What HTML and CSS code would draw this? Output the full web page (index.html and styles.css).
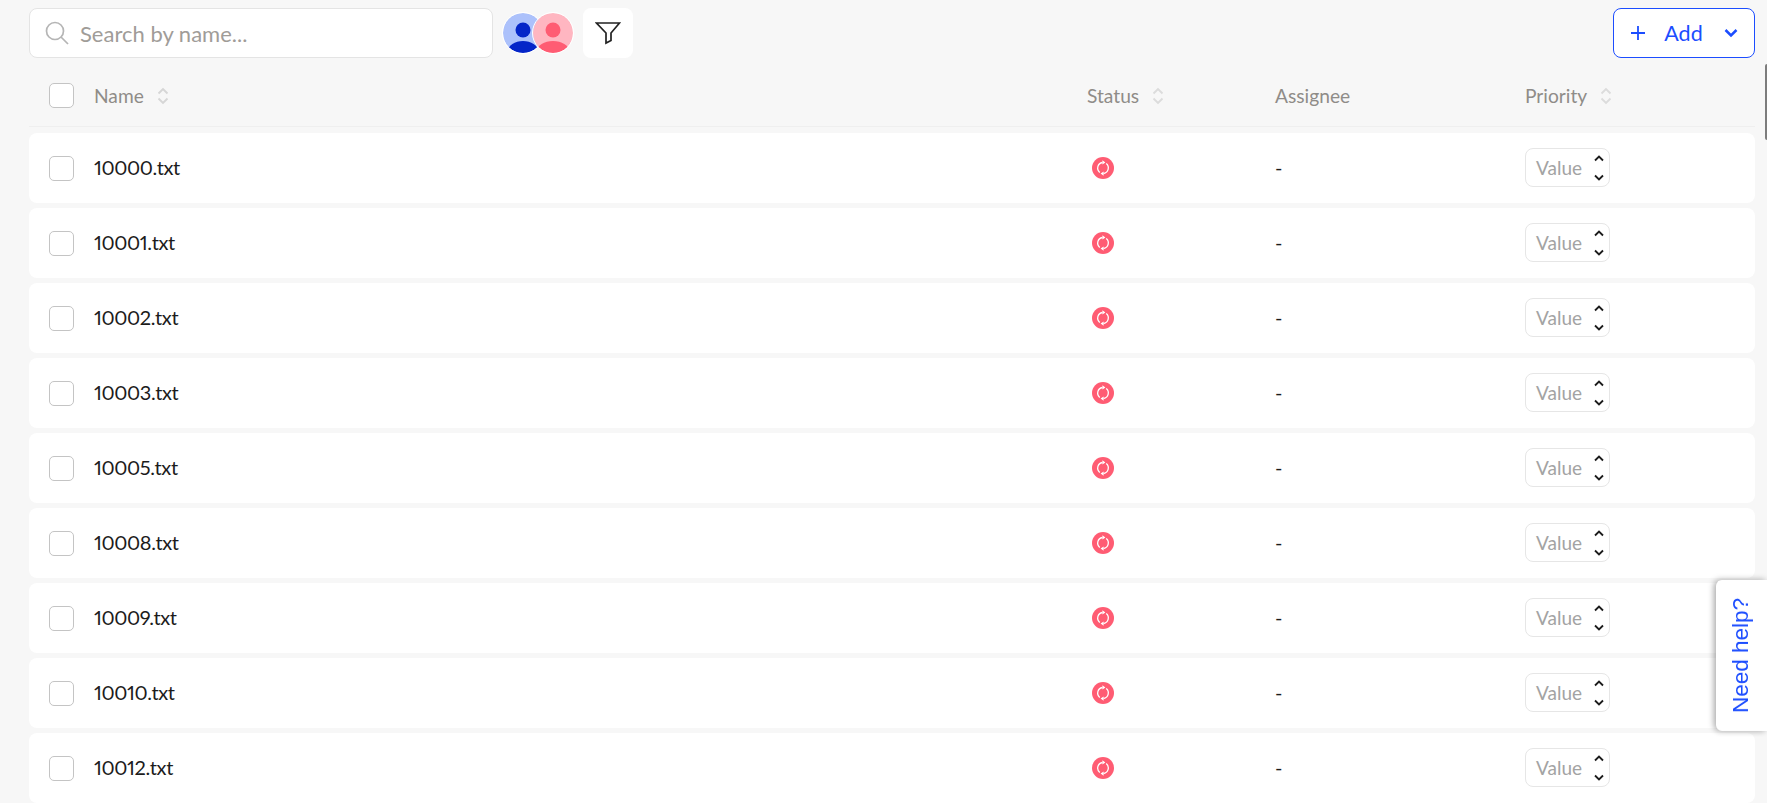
FILE: index.html
```html
<!DOCTYPE html>
<html lang="en">
<head>
<meta charset="utf-8">
<title>Files</title>
<link rel="stylesheet" href="styles.css">
</head>
<body>
<svg class="defs" width="0" height="0">
  <defs>
    <symbol id="sort" viewBox="0 0 12 18"><path class="up" d="M1.500 6.500 6 2 10.500 6.500"/><path class="down" d="M1.500 11.500 6 16 10.500 11.500"/></symbol>
    <symbol id="sync" viewBox="0 0 22 22">
      <circle cx="11" cy="11" r="11" fill="#ff5c73"/>
      <path d="M7.800 15.400A5.600 5.600 0 0 1 10.400 5.500M14.200 6.600A5.600 5.600 0 0 1 11.600 16.500" fill="none" stroke="#fff" stroke-width="1.300"/>
      <path d="M10.400 3.200 13.400 5.400 10.400 7.400ZM11.600 14.600 8.600 16.600 11.600 18.800Z" fill="#fff"/>
    </symbol>
    <symbol id="chev-up" viewBox="0 0 10 7"><path d="M1 5.500 5 1.500 9 5.500" fill="none" stroke="#1c1c1c" stroke-width="1.800"/></symbol>
    <symbol id="chev-down" viewBox="0 0 10 7"><path d="M1 1.500 5 5.500 9 1.500" fill="none" stroke="#1c1c1c" stroke-width="1.800"/></symbol>
  </defs>
</svg>
<div class="page">
  <div class="toolbar">
    <label class="search">
      <svg class="search-icon" viewBox="0 0 24 24" width="24" height="24"><circle cx="10" cy="10" r="8.500"/><path d="M16 16 23 23"/></svg>
      <span class="search-text">Search by name...</span>
    </label>
    <div class="avatars">
      <svg class="avatar" viewBox="0 0 42 42" width="42" height="42"><circle cx="21" cy="21" r="20" fill="#acc1fb"/><clipPath id="c1"><circle cx="21" cy="21" r="20"/></clipPath><g clip-path="url(#c1)" fill="#0525c8"><circle cx="21" cy="18" r="7.500"/><ellipse cx="21" cy="39" rx="15" ry="10"/></g><circle cx="21" cy="21" r="20.500" fill="none" stroke="#fff"/></svg>
      <svg class="avatar avatar-over" viewBox="0 0 42 42" width="42" height="42"><circle cx="21" cy="21" r="20" fill="#ffb6c1"/><clipPath id="c2"><circle cx="21" cy="21" r="20"/></clipPath><g clip-path="url(#c2)" fill="#ff5c73"><circle cx="21" cy="18" r="7.500"/><ellipse cx="21" cy="39" rx="16" ry="10"/></g><circle cx="21" cy="21" r="20.500" fill="none" stroke="#fff"/></svg>
    </div>
    <button class="filter" type="button">
      <svg viewBox="0 0 26 24" width="26" height="24"><path d="M1.500 2h23L16 12v7.500l-5 2.500V12Z" fill="none" stroke="#222" stroke-width="1.700" stroke-linejoin="miter"/></svg>
    </button>
    <button class="add" type="button">
      <svg viewBox="0 0 16 16" width="16" height="16"><path d="M8 1v14M1 8h14" stroke="#1c4dff" stroke-width="1.800"/></svg>
      <span class="add-label">Add</span>
      <svg viewBox="0 0 14 10" width="14" height="10"><path d="M1.500 2 7 7.500 12.500 2" fill="none" stroke="#1c4dff" stroke-width="2.500"/></svg>
    </button>
  </div>

  <div class="grid head">
    <span class="check"></span>
    <span class="cell">Name <svg class="sort sort-active"><use href="#sort"/></svg></span>
    <span class="cell">Status <svg class="sort"><use href="#sort"/></svg></span>
    <span class="cell">Assignee</span>
    <span class="cell">Priority <svg class="sort"><use href="#sort"/></svg></span>
  </div>

  <div class="rows">
    <div class="grid row"><span class="check"></span><span class="name">10000.txt</span><svg class="status"><use href="#sync"/></svg><span class="dash">-</span><span class="value"><span class="value-text">Value</span><span class="steps"><svg><use href="#chev-up"/></svg><svg><use href="#chev-down"/></svg></span></span></div>
    <div class="grid row"><span class="check"></span><span class="name">10001.txt</span><svg class="status"><use href="#sync"/></svg><span class="dash">-</span><span class="value"><span class="value-text">Value</span><span class="steps"><svg><use href="#chev-up"/></svg><svg><use href="#chev-down"/></svg></span></span></div>
    <div class="grid row"><span class="check"></span><span class="name">10002.txt</span><svg class="status"><use href="#sync"/></svg><span class="dash">-</span><span class="value"><span class="value-text">Value</span><span class="steps"><svg><use href="#chev-up"/></svg><svg><use href="#chev-down"/></svg></span></span></div>
    <div class="grid row"><span class="check"></span><span class="name">10003.txt</span><svg class="status"><use href="#sync"/></svg><span class="dash">-</span><span class="value"><span class="value-text">Value</span><span class="steps"><svg><use href="#chev-up"/></svg><svg><use href="#chev-down"/></svg></span></span></div>
    <div class="grid row"><span class="check"></span><span class="name">10005.txt</span><svg class="status"><use href="#sync"/></svg><span class="dash">-</span><span class="value"><span class="value-text">Value</span><span class="steps"><svg><use href="#chev-up"/></svg><svg><use href="#chev-down"/></svg></span></span></div>
    <div class="grid row"><span class="check"></span><span class="name">10008.txt</span><svg class="status"><use href="#sync"/></svg><span class="dash">-</span><span class="value"><span class="value-text">Value</span><span class="steps"><svg><use href="#chev-up"/></svg><svg><use href="#chev-down"/></svg></span></span></div>
    <div class="grid row"><span class="check"></span><span class="name">10009.txt</span><svg class="status"><use href="#sync"/></svg><span class="dash">-</span><span class="value"><span class="value-text">Value</span><span class="steps"><svg><use href="#chev-up"/></svg><svg><use href="#chev-down"/></svg></span></span></div>
    <div class="grid row"><span class="check"></span><span class="name">10010.txt</span><svg class="status"><use href="#sync"/></svg><span class="dash">-</span><span class="value"><span class="value-text">Value</span><span class="steps"><svg><use href="#chev-up"/></svg><svg><use href="#chev-down"/></svg></span></span></div>
    <div class="grid row"><span class="check"></span><span class="name">10012.txt</span><svg class="status"><use href="#sync"/></svg><span class="dash">-</span><span class="value"><span class="value-text">Value</span><span class="steps"><svg><use href="#chev-up"/></svg><svg><use href="#chev-down"/></svg></span></span></div>
  </div>
</div>
<div class="thumb"></div>
<a class="help">Need help?</a>
</body>
</html>
```

FILE: styles.css
```css
* { box-sizing: border-box; }
html, body { margin: 0; height: 100%; overflow: hidden; }
body {
  background: #f7f7f7;
  font-family: "Lato", "Noto Sans", sans-serif;
  color: #1c1c1c;
}
.defs { position: absolute; }
.page { padding: 8px 12px 0 29px; }

.toolbar { display: flex; align-items: center; height: 50px; }
.search {
  width: 464px; height: 50px; display: flex; align-items: center; gap: 11px;
  padding-left: 15px; background: #fff; border: 1px solid #e4e4e4; border-radius: 8px;
}
.search-icon { fill: none; stroke: #b5b5b5; stroke-width: 1.700; }
.search-text { font-size: 22px; color: #a09c98; }
.avatars { display: flex; margin-left: 9px; }
.avatar { display: block; }
.avatar-over { margin-left: -12px; }
.filter {
  width: 50px; height: 50px; margin-left: 9px; padding: 0; border: 0; border-radius: 8px;
  background: #fff; display: flex; align-items: center; justify-content: center;
}
.add {
  margin-left: auto; width: 142px; height: 50px; padding: 0 16px 0 16px;
  display: flex; align-items: center; justify-content: space-between;
  background: #fff; border: 1.500px solid #1c4dff; border-radius: 8px;
  color: #1c4dff; font: 400 21.500px "Lato", sans-serif;
}
.add-label { margin-right: 3px; }

.grid {
  display: grid; align-items: center;
  grid-template-columns: 45px 993px 188px 250px 1fr;
  padding-left: 20px;
}
.head { height: 69px; padding-top: 7px; border-bottom: 1px solid #efefef; color: #8f8c88; font-size: 19.200px; }
.cell { display: flex; align-items: center; gap: 13px; margin-bottom: 1px; }
.check { width: 25px; height: 25px; background: #fff; border: 1px solid #c4c4c4; border-radius: 5px; }
.sort { width: 12px; height: 18px; margin-top: 2px; fill: none; stroke: #dcdcdc; stroke-width: 1.900; }
.sort-active .up { stroke: #9a9a9a; }
.sort-active { stroke: #d6d6d6; }

.rows { display: flex; flex-direction: column; gap: 5px; padding-top: 6px; }
.row { height: 70px; flex: none; background: #fff; border-radius: 8px; }
.name { font-size: 20px; letter-spacing: -0.400px; font-variant-numeric: proportional-nums; color: #1c1c1c; margin-bottom: 2px; }
.status { width: 22px; height: 22px; margin-left: 5px; }
.dash { font-size: 20px; margin-bottom: 2px; }
.value {
  width: 85px; height: 39px; margin-bottom: 1px;
  display: flex; align-items: center; justify-content: space-between;
  padding: 0 5px 0 10px; background: #fff; border: 1px solid #e6e6e6; border-radius: 8px;
}
.value-text { font-size: 19px; color: #a3a3a3; margin-bottom: 1px; }
.steps { display: flex; flex-direction: column; gap: 12px; }
.steps svg { display: block; width: 10px; height: 7px; }

.thumb { position: fixed; top: 64px; right: 0; width: 2px; height: 76px; background: #7d7d7d; border-radius: 2px 0 0 2px; }
.help {
  position: fixed; top: 580px; right: 0; width: 51px; height: 151px;
  display: flex; align-items: center; justify-content: center;
  background: #fff; border-radius: 0 6px 6px 0; box-shadow: 2px 0 6px rgba(0,0,0,.35);
  font: 22.500px "Liberation Sans", sans-serif; color: #1c4dff;
  writing-mode: vertical-rl; transform: rotate(180deg);
}
```
